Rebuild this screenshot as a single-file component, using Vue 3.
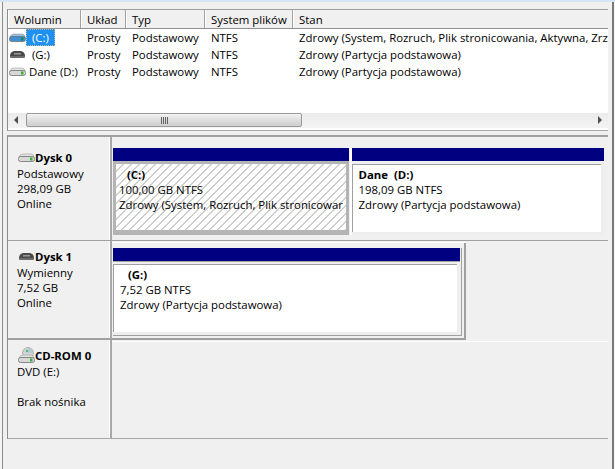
<script setup>
const cols = [
  { label: 'Wolumin', w: 73 },
  { label: 'Układ', w: 45 },
  { label: 'Typ', w: 79 },
  { label: 'System plików', w: 88 },
  { label: 'Stan', w: 315 }
]
const rows = [
  { name: '\u00a0(C:)', icon: 'blue', sel: true, stan: 'Zdrowy (System, Rozruch, Plik stronicowania, Aktywna, Zrz' },
  { name: '\u00a0(G:)', icon: 'usb', sel: false, stan: 'Zdrowy (Partycja podstawowa)' },
  { name: 'Dane (D:)', icon: 'gray', sel: false, stan: 'Zdrowy (Partycja podstawowa)' }
]
</script>

<template>
  <div class="app">
    <div class="outer">
      <section class="list">
        <div class="head">
          <div v-for="c in cols" :key="c.label" class="hcell" :style="{ width: c.w + 'px' }">{{ c.label }}</div>
        </div>
        <div class="rows">
          <div v-for="r in rows" :key="r.name" class="row">
            <div class="cell name" :style="{ width: cols[0].w + 'px' }">
              <svg class="ico" width="17" height="11" viewBox="0 0 17 11">
                <template v-if="r.icon === 'usb'">
                  <path d="M1 7 Q1 3 5 2 H12 Q16 3 16 7 V8 H1 Z" fill="#4a4a4a" />
                  <rect x="5" y="4" width="7" height="1.5" fill="#9a9a9a" />
                  <rect x="1" y="7" width="15" height="2" rx="1" fill="#6c6c6c" />
                </template>
                <template v-else>
                  <path d="M1 5 Q2 2 5 2 H13 Q15.5 2 16 5 Z" :fill="r.icon === 'blue' ? '#8fc3ec' : '#e4e4e4'" stroke="#8a8a8a" stroke-width=".5" />
                  <rect x="0.5" y="4.5" width="16" height="5" rx="2" :fill="r.icon === 'blue' ? '#3f8fd2' : '#d8d8d8'" stroke="#707070" stroke-width=".8" />
                  <rect x="12" y="5.5" width="2.5" height="3" :fill="r.icon === 'blue' ? '#0c8a5c' : '#2fb53a'" />
                </template>
              </svg>
              <span class="nm" :class="{ sel: r.sel }">{{ r.name }}</span>
            </div>
            <div class="cell" :style="{ width: cols[1].w + 'px' }">Prosty</div>
            <div class="cell" :style="{ width: cols[2].w + 'px' }">Podstawowy</div>
            <div class="cell" :style="{ width: cols[3].w + 'px' }">NTFS</div>
            <div class="cell" :style="{ width: cols[4].w + 'px' }">{{ r.stan }}</div>
          </div>
        </div>
        <div class="hscroll">
          <span class="arrow left"></span>
          <div class="thumb"><span class="grip"></span><span class="grip"></span><span class="grip"></span><span class="grip"></span></div>
          <span class="arrow right"></span>
        </div>
      </section>

      <section class="disks">
        <div class="disk d0">
          <div class="label">
            <div class="title">
              <svg class="ico" width="17" height="11" viewBox="0 0 17 11">
                <path d="M1 5 Q2 2 5 2 H13 Q15.5 2 16 5 Z" fill="#e4e4e4" stroke="#8a8a8a" stroke-width=".5" />
                <rect x="0.5" y="4.5" width="16" height="5" rx="2" fill="#d8d8d8" stroke="#707070" stroke-width=".8" />
                <rect x="12" y="5.5" width="2.5" height="3" fill="#2fb53a" />
              </svg>
              <b>Dysk 0</b>
            </div>
            <div>Podstawowy</div>
            <div>298,09 GB</div>
            <div>Online</div>
          </div>
          <div class="parts full">
            <div class="part c">
              <div class="bar"></div>
              <div class="body hatched">
                <b class="pname">(C:)</b>
                <div>100,00 GB NTFS</div>
                <div>Zdrowy (System, Rozruch, Plik stronicowar</div>
              </div>
            </div>
            <div class="part d">
              <div class="bar"></div>
              <div class="body plain">
                <b class="pname dn">Dane&nbsp; (D:)</b>
                <div>198,09 GB NTFS</div>
                <div>Zdrowy (Partycja podstawowa)</div>
              </div>
            </div>
          </div>
        </div>

        <div class="disk d1">
          <div class="label">
            <div class="title">
              <svg class="ico" width="17" height="11" viewBox="0 0 17 11">
                <path d="M1 7 Q1 3 5 2 H12 Q16 3 16 7 V8 H1 Z" fill="#4a4a4a" />
                <rect x="5" y="4" width="7" height="1.5" fill="#9a9a9a" />
                <rect x="1" y="7" width="15" height="2" rx="1" fill="#6c6c6c" />
              </svg>
              <b>Dysk 1</b>
            </div>
            <div>Wymienny</div>
            <div>7,52 GB</div>
            <div>Online</div>
          </div>
          <div class="parts small">
            <div class="part g">
              <div class="bar"></div>
              <div class="body plain">
                <b class="pname">(G:)</b>
                <div>7,52 GB NTFS</div>
                <div>Zdrowy (Partycja podstawowa)</div>
              </div>
            </div>
          </div>
        </div>

        <div class="disk d2">
          <div class="label">
            <div class="title">
              <svg class="ico cd" width="17" height="17" viewBox="0 0 17 17">
                <circle cx="10" cy="6" r="5.5" fill="#d5d5d5" stroke="#999" stroke-width=".7" />
                <path d="M10 1 A5 5 0 0 1 15 6 H10 Z" fill="#b8c8d8" />
                <circle cx="9" cy="4" r="1.2" fill="#45c06a" />
                <path d="M1 11 Q2 8 5 8 H13 Q15.5 8 16 11 Z" fill="#e4e4e4" stroke="#8a8a8a" stroke-width=".5" />
                <rect x="0.5" y="10.5" width="16" height="5" rx="2" fill="#d8d8d8" stroke="#707070" stroke-width=".8" />
                <rect x="12" y="11.5" width="2.5" height="3" fill="#2fb53a" />
              </svg>
              <b>CD-ROM 0</b>
            </div>
            <div>DVD (E:)</div>
            <div>&nbsp;</div>
            <div>Brak nośnika</div>
          </div>
          <div class="parts none"></div>
        </div>
      </section>
    </div>
  </div>
</template>

<style>
html, body { margin: 0; padding: 0; overflow: hidden; background: #f0f0f0; }
</style>

<style scoped>
.app {
  width: 615px;
  height: 469px;
  box-sizing: border-box;
  padding: 2px 1px 0 2px;
  background: linear-gradient(#d6e4f3 0 2px, #f4f4f4 2px);
  font-family: "Open Sans", "Noto Sans", sans-serif;
  font-size: 11.4px;
  color: #000;
  overflow: hidden;
}
.outer {
  height: 467px;
  box-sizing: border-box;
  border-left: 1px solid #8c8c8c;
  border-right: 2px solid #7a7a7a;
  padding: 7px 4px 0 4px;
  background: #f0f0f0;
}
.list {
  height: 122px;
  box-sizing: border-box;
  border-top: 1px solid #a0a0a0;
  border-left: 1px solid #8c8c8c;
  border-bottom: 1px solid #a8a8a8;
  background: #fff;
  display: flex;
  flex-direction: column;
}
.head {
  display: flex;
  height: 18px;
  flex: none;
  background: #f0f0f0;
  border-bottom: 1px solid #8f8f8f;
}
.hcell {
  box-sizing: border-box;
  padding: 1px 0 0 5px;
  line-height: 18px;
  white-space: nowrap;
  overflow: hidden;
  flex: none;
  border-right: 1px solid #a0a0a0;
  border-left: 1px solid #fff;
}
.hcell:last-child { border-right: 0; }
.rows { flex: 1; min-height: 0; overflow: hidden; }
.row { display: flex; height: 17px; line-height: 17px; }
.cell {
  box-sizing: border-box;
  padding-left: 6px;
  white-space: nowrap;
  overflow: hidden;
  flex: none;
}
.cell.name { padding-left: 1px; display: flex; align-items: center; }
.ico { flex: none; display: block; }
.nm { padding: 0 3px; height: 17px; }
.nm.sel {
  background: #1e90f2;
  color: #fff;
  width: 29px;
  box-sizing: border-box;
  outline: 1px dotted rgba(255, 205, 130, .7);
  outline-offset: -1px;
}
.hscroll {
  flex: none;
  height: 15px;
  margin-bottom: 2px;
  background: linear-gradient(#ebebeb, #f3f3f3);
  display: flex;
  align-items: center;
  padding-left: 18px;
  position: relative;
}
.thumb {
  width: 276px;
  height: 14px;
  margin-top: -1px;
  box-sizing: border-box;
  border: 1px solid #989898;
  border-radius: 2px;
  background: linear-gradient(#f4f4f4, #dedede 50%, #cfcfcf);
  display: flex;
  justify-content: center;
  align-items: center;
  gap: 1px;
}
.grip { width: 1px; height: 7px; background: #606060; }
.arrow {
  position: absolute;
  top: 3px;
  width: 0;
  height: 0;
  border-top: 4px solid transparent;
  border-bottom: 4px solid transparent;
}
.arrow.left { left: 6px; border-right: 4px solid #505050; }
.arrow.right { right: 6px; border-left: 4px solid #505050; }

.disks {
  margin-top: 4px;
  border-top: 2px solid #a0a0a0;
  border-left: 1px solid #8c8c8c;
  display: flex;
  flex-direction: column;
}
.disk { display: flex; line-height: 15px; flex: none; }
.d0 { height: 103px; border-bottom: 1px solid #a0a0a0; }
.d1 { height: 99px; }
.d2 { height: 98px; border-bottom: 1px solid #a8a8a8; }
.label {
  width: 104px;
  flex: none;
  box-sizing: border-box;
  padding: 12px 0 0 9px;
  border-right: 2px solid #a8a8a8;
  box-shadow: inset -1px 0 0 #fff;
  white-space: nowrap;
}
.d1 .label { padding-top: 7px; border-bottom: 2px solid #a0a0a0; }
.d2 .label { padding-top: 7px; }
.title { display: flex; align-items: center; height: 17px; margin-left: 1px; }
.parts { display: flex; box-sizing: border-box; }
.parts.full { width: 496px; padding: 11px 1px 0 1px; gap: 3px; }
.parts.small {
  width: 354px;
  height: 97px;
  margin-top: 2px;
  padding: 5px 0 0 1px;
  border-right: 2px solid #a0a0a0;
  border-bottom: 2px solid #a0a0a0;
  box-shadow: 0 -1px 0 #fff;
}
.parts.none {
  flex: 1;
  margin-top: 1px;
  border-top: 1px solid #fff;
}
.part { display: flex; flex-direction: column; min-width: 0; }
.part.c { width: 236px; }
.part.d { width: 256px; box-shadow: -2px 0 0 #fff; height: 87px; }
.part.g {
  width: 349px;
  height: 88px;
  box-sizing: border-box;
  border-right: 1px solid #a0a0a0;
  border-bottom: 1px solid #a0a0a0;
}
.bar { height: 13px; flex: none; background: #000080; }
.part.d .bar { margin-right: 3px; }
.part.g .bar { margin-right: 1px; box-shadow: 0 1px 0 #a0a0a0; }
.body {
  box-sizing: border-box;
  flex: none;
  overflow: hidden;
  white-space: nowrap;
}
.body.hatched {
  height: 74px;
  border: 3px solid #b4b4b4;
  border-bottom-width: 5px;
  padding: 3px 0 0 3px;
  background: repeating-linear-gradient(135deg, #fff 0 4.8px, #cfcfcf 4.8px 5.66px);
}
.body.plain {
  height: 71px;
  background: #fff;
  border: solid #eeeeee;
  border-width: 0 3px 3px 0;
  box-shadow: inset 1px 0 0 #a0a0a0, inset 0 1px 0 #a0a0a0;
  margin-top: 3px;
  padding: 3px 0 0 7px;
}
.part.d .body.plain { margin-right: 3px; }
.part.g .body.plain { width: 347px; }
.pname { display: block; margin-left: 8px; }
.pname.dn { margin-left: 0; }
</style>
